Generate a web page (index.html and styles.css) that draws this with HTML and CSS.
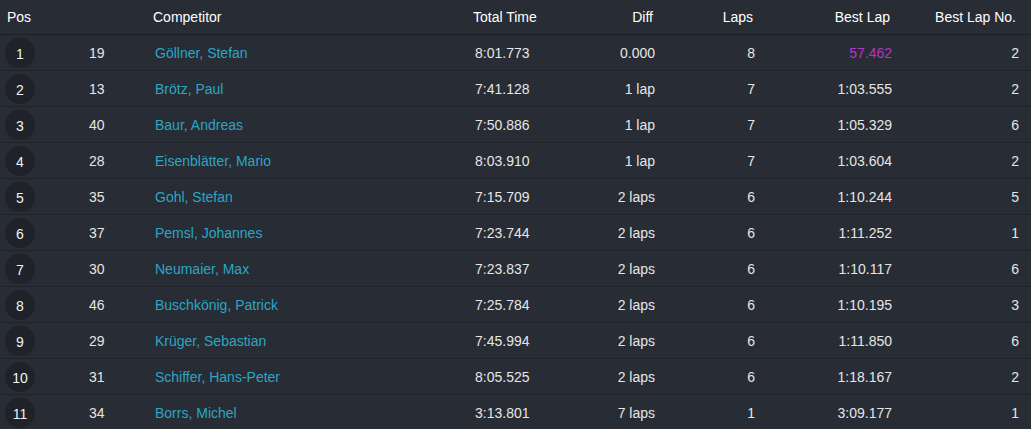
FILE: index.html
```html
<!DOCTYPE html>
<html>
<head>
<meta charset="utf-8">
<link rel="stylesheet" href="styles.css">
</head>
<body>
<table class="results">
  <colgroup>
    <col class="c-pos"><col class="c-no"><col class="c-name"><col class="c-time"><col class="c-diff"><col class="c-laps"><col class="c-best"><col class="c-bestno">
  </colgroup>
  <thead>
    <tr>
      <th class="l">Pos</th><th></th><th class="l">Competitor</th><th class="l">Total Time</th><th class="r">Diff</th><th class="r">Laps</th><th class="r">Best Lap</th><th class="r last">Best Lap No.</th>
    </tr>
  </thead>
  <tbody>
    <tr><td class="pos"><span class="badge">1</span></td><td class="no">19</td><td class="name"><a>Göllner, Stefan</a></td><td class="time">8:01.773</td><td class="r">0.000</td><td class="r">8</td><td class="r best">57.462</td><td class="r last">2</td></tr>
    <tr><td class="pos"><span class="badge">2</span></td><td class="no">13</td><td class="name"><a>Brötz, Paul</a></td><td class="time">7:41.128</td><td class="r">1 lap</td><td class="r">7</td><td class="r">1:03.555</td><td class="r last">2</td></tr>
    <tr><td class="pos"><span class="badge">3</span></td><td class="no">40</td><td class="name"><a>Baur, Andreas</a></td><td class="time">7:50.886</td><td class="r">1 lap</td><td class="r">7</td><td class="r">1:05.329</td><td class="r last">6</td></tr>
    <tr><td class="pos"><span class="badge">4</span></td><td class="no">28</td><td class="name"><a>Eisenblätter, Mario</a></td><td class="time">8:03.910</td><td class="r">1 lap</td><td class="r">7</td><td class="r">1:03.604</td><td class="r last">2</td></tr>
    <tr><td class="pos"><span class="badge">5</span></td><td class="no">35</td><td class="name"><a>Gohl, Stefan</a></td><td class="time">7:15.709</td><td class="r">2 laps</td><td class="r">6</td><td class="r">1:10.244</td><td class="r last">5</td></tr>
    <tr><td class="pos"><span class="badge">6</span></td><td class="no">37</td><td class="name"><a>Pemsl, Johannes</a></td><td class="time">7:23.744</td><td class="r">2 laps</td><td class="r">6</td><td class="r">1:11.252</td><td class="r last">1</td></tr>
    <tr><td class="pos"><span class="badge">7</span></td><td class="no">30</td><td class="name"><a>Neumaier, Max</a></td><td class="time">7:23.837</td><td class="r">2 laps</td><td class="r">6</td><td class="r">1:10.117</td><td class="r last">6</td></tr>
    <tr><td class="pos"><span class="badge">8</span></td><td class="no">46</td><td class="name"><a>Buschkönig, Patrick</a></td><td class="time">7:25.784</td><td class="r">2 laps</td><td class="r">6</td><td class="r">1:10.195</td><td class="r last">3</td></tr>
    <tr><td class="pos"><span class="badge">9</span></td><td class="no">29</td><td class="name"><a>Krüger, Sebastian</a></td><td class="time">7:45.994</td><td class="r">2 laps</td><td class="r">6</td><td class="r">1:11.850</td><td class="r last">6</td></tr>
    <tr><td class="pos"><span class="badge">10</span></td><td class="no">31</td><td class="name"><a>Schiffer, Hans-Peter</a></td><td class="time">8:05.525</td><td class="r">2 laps</td><td class="r">6</td><td class="r">1:18.167</td><td class="r last">2</td></tr>
    <tr><td class="pos"><span class="badge">11</span></td><td class="no">34</td><td class="name"><a>Borrs, Michel</a></td><td class="time">3:13.801</td><td class="r">7 laps</td><td class="r">1</td><td class="r">3:09.177</td><td class="r last">1</td></tr>
  </tbody>
</table>
</body>
</html>
```

FILE: styles.css
```css
html, body {
  margin: 0;
  padding: 0;
  background: #282c34;
}
body {
  font-family: "Liberation Sans", Arial, sans-serif;
  font-size: 14px;
  color: #e6e6e6;
  overflow: hidden;
}
.results {
  width: 1031px;
  border-collapse: collapse;
  table-layout: fixed;
}
.c-pos { width: 82px; }
.c-no { width: 64px; }
.c-name { width: 320px; }
.c-time { width: 94px; }
.c-diff { width: 103px; }
.c-laps { width: 100px; }
.c-best { width: 137px; }
.c-bestno { width: 131px; }

.results th {
  height: 33px;
  padding: 0 8px 1px 7px;
  font-weight: normal;
  color: #ffffff;
  border-bottom: 1px solid #1d2026;
  white-space: nowrap;
}
.results td {
  height: 35px;
  padding: 0 8px 0 7px;
  border-bottom: 1px solid #1f2228;
  white-space: nowrap;
}
.l { text-align: left; }
.r { text-align: right; }
.results th.r { padding-right: 10px; }
.results th.last { padding-right: 15px; }
.results td.last { padding-right: 12px; }
.results td.pos { padding-left: 5px; }
.badge {
  display: flex;
  align-items: center;
  justify-content: center;
  width: 30px;
  height: 30px;
  border-radius: 50%;
  background: #1f2228;
  color: #f2f2f2;
  padding-top: 2px;
  box-sizing: border-box;
}
.results td.name { padding-left: 9px; }
.results td.time { padding-left: 9px; }
.name a {
  color: #2ba6c4;
  text-decoration: none;
}
.best { color: #b236c9; }
```
